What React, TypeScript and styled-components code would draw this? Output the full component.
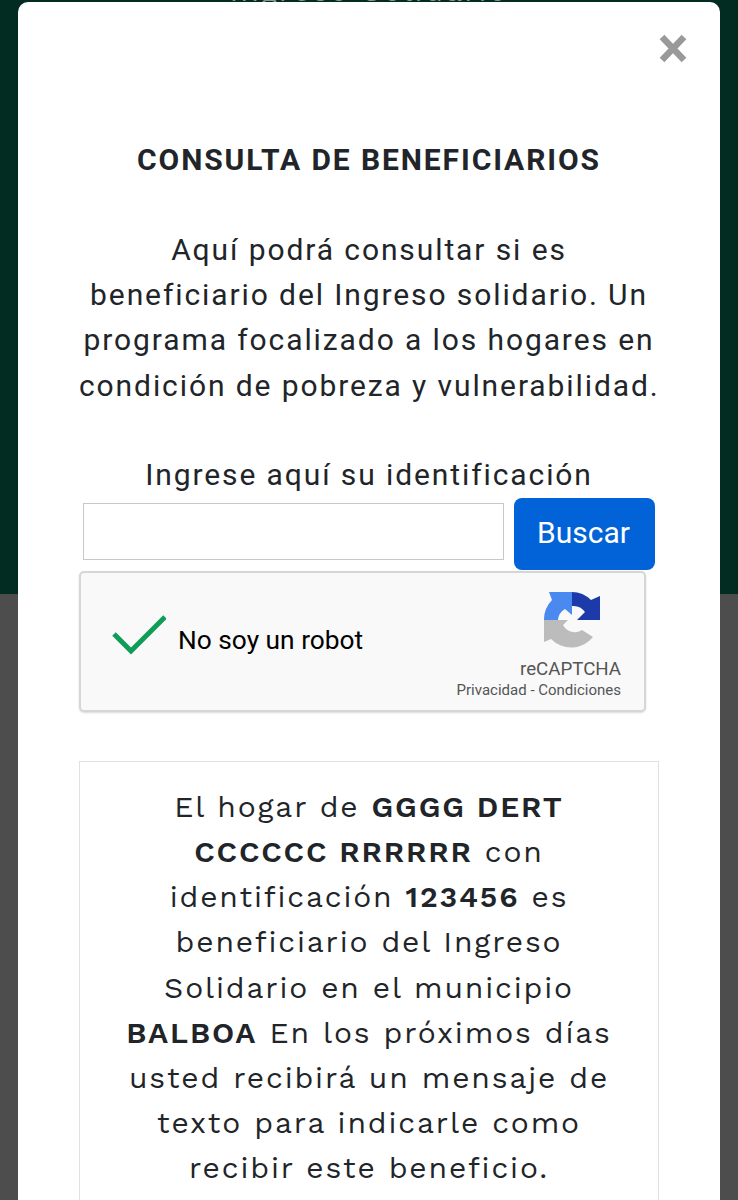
import styled, { createGlobalStyle } from 'styled-components'

const GlobalStyle = createGlobalStyle`
  html, body {
    margin: 0;
    padding: 0;
    background: #4d4d4d;
  }
`

const RecaptchaLogo = () => (
  <LogoMark width="56" height="56" viewBox="0 0 56 56">
    <path d="M28 0 A28 28 0 0 1 47 8 L56 4 L56 28 L33 28 L41 20 A14 14 0 0 0 28 14 Z" fill="#1c3aa9" />
    <path d="M0 28 A28 28 0 0 1 8 8 L5 0 L28 0 L28 23 L21 17 A14 14 0 0 0 14 28 Z" fill="#4a8af0" />
    <path d="M0 28 L24 28 L19 33 A13 13 0 0 0 38 38 L49 45 A28 28 0 0 1 7 47 L0 50 Z" fill="#bcbcbc" />
  </LogoMark>
)

const App = () => (
  <>
    <GlobalStyle />
    <Page>
      <GreenBand>
        <BehindTitle>Ingreso Solidario</BehindTitle>
      </GreenBand>
      <GreyBand />
      <Modal>
        <CloseButton aria-label="Cerrar">
          <svg width="30" height="30" viewBox="0 0 30 30">
            <path d="M4 3 L26 26 M26 3 L4 26" stroke="#999" strokeWidth="6.5" fill="none" />
          </svg>
        </CloseButton>
        <Title>CONSULTA DE BENEFICIARIOS</Title>
        <Intro>
          Aquí podrá consultar si es
          <br />
          beneficiario del Ingreso solidario. Un
          <br />
          programa focalizado a los hogares en
          <br />
          condición de pobreza y vulnerabilidad.
        </Intro>
        <FieldLabel>Ingrese aquí su identificación</FieldLabel>
        <SearchRow>
          <IdInput aria-label="Identificación" />
          <SearchButton>Buscar</SearchButton>
        </SearchRow>
        <Captcha>
          <CheckMark width="54" height="42" viewBox="0 0 54 42">
            <path d="M2 20 L19 37 L53 3" stroke="#0f9d58" strokeWidth="5" fill="none" />
          </CheckMark>
          <CaptchaLabel>No soy un robot</CaptchaLabel>
          <CaptchaBrand>
            <RecaptchaLogo />
            <BrandName>reCAPTCHA</BrandName>
            <BrandLinks>Privacidad - Condiciones</BrandLinks>
          </CaptchaBrand>
        </Captcha>
        <ResultCard>
          El hogar de <strong>GGGG DERT</strong>
          <br />
          <strong>CCCCCC RRRRRR</strong> con
          <br />
          identificación <strong>123456</strong> es
          <br />
          beneficiario del Ingreso
          <br />
          Solidario en el municipio
          <br />
          <strong>BALBOA</strong> En los próximos días
          <br />
          usted recibirá un mensaje de
          <br />
          texto para indicarle como
          <br />
          recibir este beneficio.
        </ResultCard>
      </Modal>
    </Page>
  </>
)

const Page = styled.div`
  position: relative;
  display: flex;
  flex-direction: column;
  height: 1200px;
  overflow: hidden;
`

const GreenBand = styled.div`
  display: flex;
  justify-content: center;
  height: 594px;
  background: #022c22;
`

const BehindTitle = styled.div`
  margin-top: -25px;
  color: #8a9692;
  font-family: 'Work Sans', 'Open Sans', sans-serif;
  font-size: 30px;
  line-height: 32px;
  letter-spacing: 2px;
`

const GreyBand = styled.div`
  flex: 1;
  background: #4d4d4d;
`

const Modal = styled.div`
  position: absolute;
  top: 2px;
  left: 18px;
  width: 702px;
  height: 1260px;
  box-sizing: border-box;
  padding: 135px 61px 0;
  border-radius: 10px;
  background: #fff;
  color: #212529;
`

const CloseButton = styled.button`
  position: absolute;
  top: 32px;
  right: 32px;
  display: flex;
  padding: 0;
  border: 0;
  background: none;
`

const Title = styled.h1`
  margin: 0;
  font-family: Roboto, sans-serif;
  font-size: 30px;
  font-weight: 700;
  line-height: 45px;
  letter-spacing: 1.9px;
  text-align: center;
`

const Intro = styled.p`
  margin: 45px 0 0;
  font-family: Roboto, sans-serif;
  font-size: 30px;
  font-weight: 400;
  line-height: 45.2px;
  letter-spacing: 1.9px;
  text-align: center;
  white-space: nowrap;
`

const FieldLabel = styled.p`
  margin: 44px 0 0;
  font-family: Roboto, sans-serif;
  font-size: 30px;
  line-height: 45px;
  letter-spacing: 1.9px;
  text-align: center;
`

const SearchRow = styled.div`
  display: flex;
  align-items: flex-start;
  gap: 10px;
  margin: 1px 0 0 4px;
`

const IdInput = styled.input`
  width: 421px;
  height: 57px;
  box-sizing: border-box;
  margin-top: 5px;
  border: 1px solid #c8c8c8;
  background: #fff;
`

const SearchButton = styled.button`
  width: 141px;
  height: 72px;
  padding: 0 2px 2px 0;
  border: 0;
  border-radius: 8px;
  background: #0263d8;
  color: #fff;
  font-family: Roboto, sans-serif;
  font-size: 30px;
`

const Captcha = styled.div`
  display: flex;
  align-items: center;
  width: 567px;
  height: 141px;
  box-sizing: border-box;
  margin-top: 1px;
  padding: 0 23px 0 31px;
  border: 2px solid #d6d6d6;
  border-radius: 5px;
  background: #f9f9f9;
  box-shadow: 0 1px 2px rgba(0, 0, 0, 0.15);
`

const CheckMark = styled.svg`
  flex: none;
  align-self: flex-start;
  margin-top: 41px;
`

const CaptchaLabel = styled.span`
  margin: 0 0 2px 12px;
  color: #000;
  font-family: Roboto, sans-serif;
  font-size: 26.3px;
`

const CaptchaBrand = styled.div`
  display: flex;
  flex-direction: column;
  align-items: flex-end;
  margin-left: auto;
  padding-top: 10px;
  color: #555;
  font-family: Roboto, sans-serif;
`

const LogoMark = styled.svg`
  margin-right: 21px;
`

const BrandName = styled.span`
  margin-top: 10px;
  font-size: 18.7px;
  line-height: 22px;
`

const BrandLinks = styled.span`
  font-size: 15px;
  line-height: 20px;
`

const ResultCard = styled.div`
  width: 580px;
  height: 520px;
  box-sizing: border-box;
  margin-top: 49px;
  padding: 22px 0 0;
  border: 1px solid #dee2e6;
  font-family: 'Work Sans', 'Open Sans', sans-serif;
  font-size: 30px;
  line-height: 45.2px;
  letter-spacing: 1.85px;
  text-align: center;
  white-space: nowrap;

  strong {
    font-weight: 600;
  }
`

export default App
